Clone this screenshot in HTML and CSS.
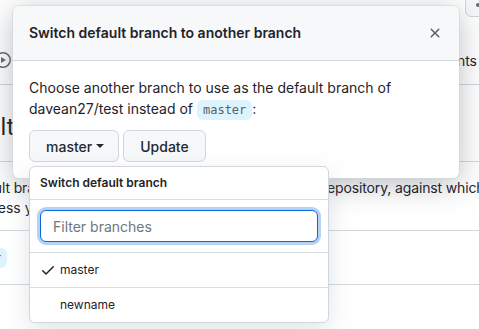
FILE: index.html
```html
<!DOCTYPE html>
<html lang="en">
<head>
<meta charset="utf-8">
<title>Switch default branch</title>
<link rel="stylesheet" href="styles.css">
</head>
<body>
<div class="page">
  <div class="repo-head">
    <span class="head-btn"><span class="head-dot"></span></span>
  </div>
  <nav class="tabs">
    <span class="tab">
      <svg class="tab-icon" viewBox="0 0 16 16" width="16" height="16" aria-hidden="true"><path d="M8 0a8 8 0 1 1 0 16A8 8 0 0 1 8 0ZM1.5 8a6.5 6.5 0 1 0 13 0 6.5 6.5 0 0 0-13 0Zm4.879-2.773 4.264 2.559a.25.25 0 0 1 0 .428l-4.264 2.559A.25.25 0 0 1 6 10.559V5.442a.25.25 0 0 1 .379-.215Z"/></svg>
      Actions
    </span>
    <span class="tab">Agents</span>
  </nav>
  <main class="content">
    <h2 class="subhead">Default branch</h2>
    <p class="desc">
      <span class="desc-line desc-line-1">The default branch is considered the “base” branch in your repository, against which all pull requests and code commits are automatically</span>
      <span class="desc-line desc-line-2">made, unless you specify a different branch.</span>
    </p>
    <div class="box">
      <div class="box-row"><span class="branch-chip">master</span></div>
    </div>
  </main>
</div>

<div class="dialog" role="dialog" aria-label="Switch default branch to another branch">
  <div class="dialog-header">
    <h1 class="dialog-title">Switch default branch to another branch</h1>
    <button class="close-btn" type="button" aria-label="Close">
      <svg viewBox="0 0 16 16" width="16" height="16" aria-hidden="true"><path d="M3.72 3.72a.75.75 0 0 1 1.06 0L8 6.94l3.220-3.22a.749.749 0 0 1 1.275.326.749.749 0 0 1-.215.734L9.06 8l3.22 3.22a.749.749 0 0 1-.326 1.275.749.749 0 0 1-.734-.215L8 9.06l-3.22 3.22a.751.751 0 0 1-1.042-.018.751.751 0 0 1-.018-1.042L6.94 8 3.72 4.78a.75.75 0 0 1 0-1.06Z"/></svg>
    </button>
  </div>
  <div class="dialog-body">
    <p class="dialog-text">Choose another branch to use as the default branch of davean27/test instead of <code class="branch-chip chip-inline">master</code>:</p>
    <div class="actions">
      <div class="select-wrap">
        <button class="btn btn-select" type="button">master<span class="caret"></span></button>
        <div class="menu">
          <div class="menu-header">Switch default branch</div>
          <div class="menu-filter">
            <input class="filter-input" type="text" placeholder="Filter branches">
          </div>
          <div class="menu-item">
            <svg class="check" viewBox="0 0 16 16" width="16" height="16" aria-hidden="true"><path d="M13.78 4.22a.75.75 0 0 1 0 1.06l-7.25 7.25a.75.75 0 0 1-1.06 0L2.22 9.28a.751.751 0 0 1 .018-1.042.751.751 0 0 1 1.042-.018L6 10.94l6.72-6.72a.75.75 0 0 1 1.06 0Z"/></svg>
            master
          </div>
          <div class="menu-item">newname</div>
        </div>
      </div>
      <button class="btn" type="button">Update</button>
    </div>
  </div>
</div>
</body>
</html>
```

FILE: styles.css
```css
* { box-sizing: border-box; }

html, body {
  margin: 0;
  height: 100%;
}

body {
  background: #ffffff;
  color: #1f2328;
  font-family: Inter, "Noto Sans", "Liberation Sans", sans-serif;
  font-size: 14px;
  overflow: hidden;
  position: relative;
}

/* ---------- background page ---------- */
.page {
  width: 100%;
}

.repo-head {
  height: 17px;
  display: flex;
  justify-content: flex-end;
}

.head-btn {
  display: block;
  width: 30px;
  height: 32px;
  margin-top: -15px;
  margin-right: -16px;
  background: #f6f8fa;
  border: 1px solid #d0d7de;
  border-radius: 6px;
  padding: 17px 0 0 10px;
}

.head-dot {
  display: block;
  width: 4px;
  height: 4px;
  border-radius: 50%;
  background: #656d76;
}

.tabs {
  display: flex;
  justify-content: space-between;
  align-items: center;
  margin: 0 -6px 0 -5px;
  padding: 27px 0 8px;
  border-bottom: 1px solid #d0d7de;
}

.tab {
  display: flex;
  align-items: center;
  gap: 8px;
  height: 32px;
  padding: 0 8px 0 0;
  white-space: nowrap;
  color: #1f2328;
}

.tab-icon {
  fill: #656d76;
}

.content {
  margin-left: -64px;
  padding-top: 24px;
}

.subhead {
  margin: 0 0 16px -3px;
  padding-bottom: 16px;
  font-size: 24px;
  font-weight: 400;
  line-height: 36px;
  border-bottom: 1px solid #d0d7de;
  width: 600px;
}

.desc {
  margin: 0 0 12px;
  line-height: 20px;
}

.desc-line {
  display: block;
  white-space: nowrap;
}

.desc-line-1 {
  letter-spacing: -0.14px;
}

.desc-line-2 {
  margin-left: -3px;
}

.box {
  border-top: 1px solid #d0d7de;
  border-bottom: 1px solid #d0d7de;
  width: 700px;
}

.box-row {
  height: 53px;
  display: flex;
  align-items: center;
  padding-left: 16px;
}

.branch-chip {
  display: inline-block;
  font-family: "DejaVu Sans Mono", "Liberation Mono", monospace;
  font-size: 12px;
  line-height: 18px;
  padding: 1px 6px;
  border-radius: 6px;
  background: #ddf4ff;
  color: #57606a;
}

/* ---------- dialog ---------- */
.dialog {
  position: absolute;
  top: 6px;
  left: 13px;
  width: 446px;
  background: #ffffff;
  border-radius: 6px;
  box-shadow: 0 0 0 1px rgba(208, 215, 222, 0.6), 0 6px 30px rgba(50, 58, 66, 0.34);
}

.dialog-header {
  display: flex;
  align-items: center;
  justify-content: space-between;
  padding: 16px;
  background: #f6f8fa;
  border-bottom: 1px solid #d0d7de;
  border-radius: 6px 6px 0 0;
}

.dialog-title {
  margin: 0;
  font-size: 14px;
  font-weight: 600;
  line-height: 22px;
}

.close-btn {
  display: flex;
  margin: -8px 0;
  padding: 0;
  border: 0;
  background: none;
  fill: #57606a;
  cursor: pointer;
}

.dialog-body {
  padding: 16px;
}

.dialog-text {
  margin: 0 0 11px;
  line-height: 21px;
}

.chip-inline {
  display: inline;
  padding: 3px 6px;
  line-height: 1;
}

.actions {
  display: flex;
  gap: 4px;
}

.select-wrap {
  position: relative;
}

.btn {
  display: inline-flex;
  align-items: center;
  height: 32px;
  padding: 0 16px;
  font-family: inherit;
  font-size: 14px;
  font-weight: 500;
  color: #24292f;
  background: #f6f8fa;
  border: 1px solid #d0d7de;
  border-radius: 6px;
}

.btn-select {
  padding-right: 14px;
}

.caret {
  display: inline-block;
  margin-left: 4px;
  border-top: 4px solid #24292f;
  border-left: 4px solid transparent;
  border-right: 4px solid transparent;
}

/* ---------- dropdown menu ---------- */
.menu {
  position: absolute;
  top: 36px;
  left: 0;
  width: 300px;
  background: #ffffff;
  border: 1px solid #d0d7de;
  border-radius: 6px;
  box-shadow: 0 8px 24px rgba(140, 149, 159, 0.25);
  z-index: 2;
}

.menu-header {
  padding: 7px 10px;
  font-size: 12px;
  font-weight: 600;
  line-height: 18px;
  border-bottom: 1px solid #d8dee4;
}

.menu-filter {
  padding: 10px;
  border-bottom: 1px solid #d8dee4;
}

.filter-input {
  display: block;
  width: 100%;
  height: 32px;
  padding: 0 12px;
  font-family: inherit;
  font-size: 14px;
  color: #1f2328;
  border: 1px solid #0969da;
  border-radius: 6px;
  outline: none;
  box-shadow: 0 0 0 3px rgba(9, 105, 218, 0.3);
}

.filter-input::placeholder {
  color: #6e7781;
}

.menu-item {
  position: relative;
  padding: 8px 8px 8px 30px;
  font-size: 12px;
  line-height: 18px;
  border-bottom: 1px solid #d8dee4;
}

.menu-item:last-child {
  border-bottom: 0;
}

.check {
  position: absolute;
  left: 10px;
  top: 9px;
  fill: #1f2328;
}
```
